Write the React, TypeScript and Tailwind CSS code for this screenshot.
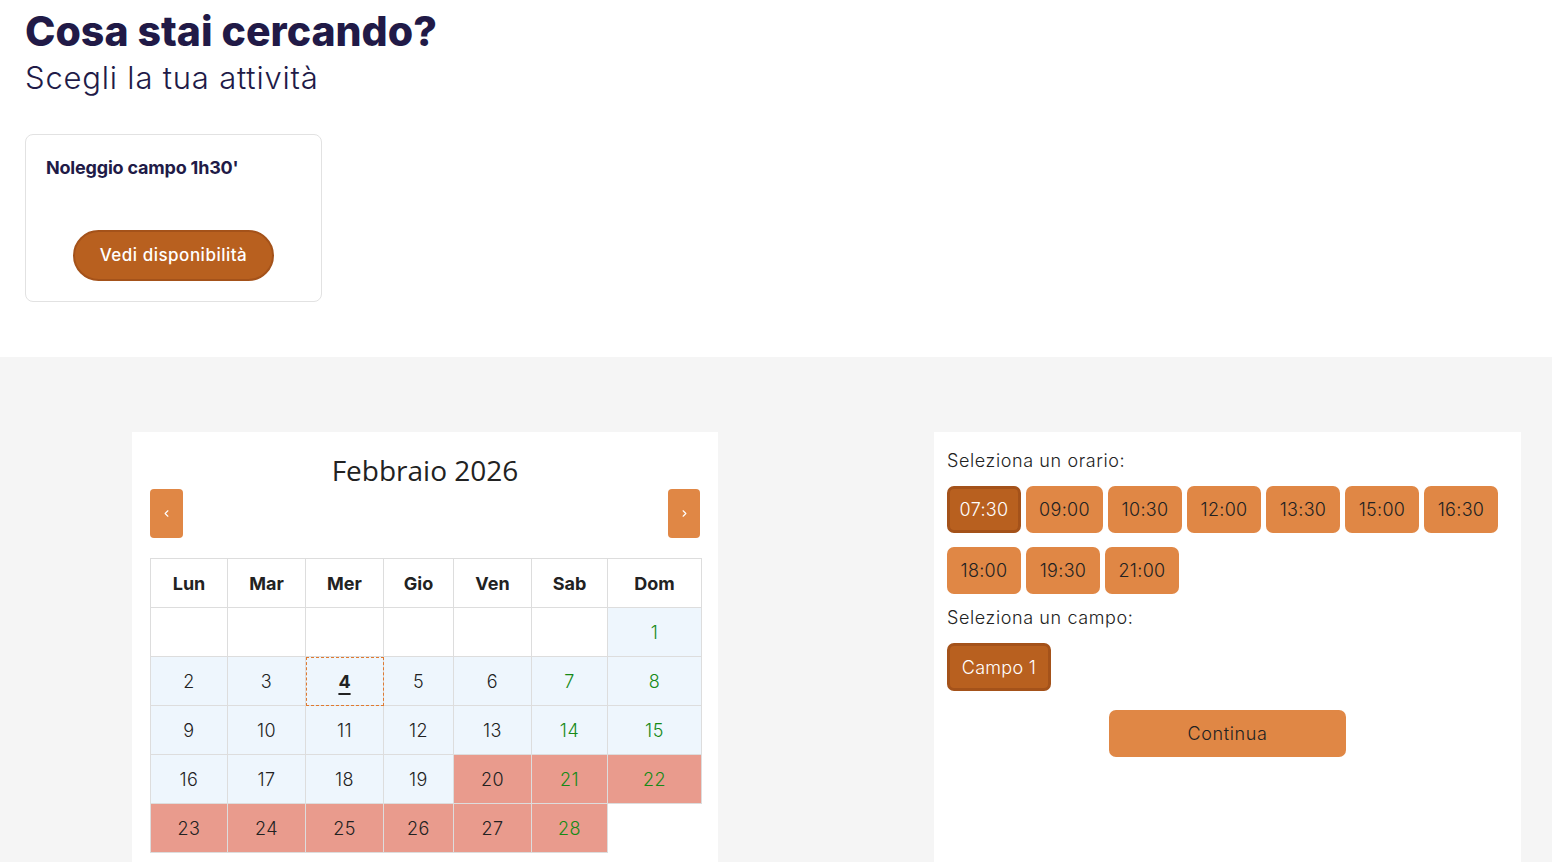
import { ChevronLeft, ChevronRight } from "lucide-react";

const heading = { fontFamily: "Inter, 'Noto Sans', sans-serif" };
const body = { fontFamily: "Inter, 'Noto Sans', sans-serif" };

const days = ["Lun", "Mar", "Mer", "Gio", "Ven", "Sab", "Dom"];
const colW = ["w-[77px]", "w-[78px]", "w-[78px]", "w-[70px]", "w-[78px]", "w-[76px]", "w-[94px]"];

type Cell = { d?: number; tone?: "blue" | "red" | "empty" };

const weeks: Cell[][] = [
  [{}, {}, {}, {}, {}, {}, { d: 1, tone: "blue" }],
  [2, 3, 4, 5, 6, 7, 8].map((d) => ({ d, tone: "blue" as const })),
  [9, 10, 11, 12, 13, 14, 15].map((d) => ({ d, tone: "blue" as const })),
  [16, 17, 18, 19, 20, 21, 22].map((d) => ({ d, tone: d >= 20 ? ("red" as const) : ("blue" as const) })),
  [...[23, 24, 25, 26, 27, 28].map((d) => ({ d, tone: "red" as const })), { tone: "empty" as const }],
];

const times = [
  ["07:30", "09:00", "10:30", "12:00", "13:30", "15:00", "16:30"],
  ["18:00", "19:30", "21:00"],
];

function Calendar() {
  return (
    <div className="w-[586px] bg-white px-[18px] pt-[20px] pb-[40px]">
      <div className="text-center text-[28px] leading-[37px] text-[#222]" style={{ fontFamily: "'Open Sans', sans-serif" }}>
        Febbraio 2026
      </div>
      <div className="flex justify-between">
        <button className="flex h-[49px] w-[33px] items-center justify-center rounded-[4px] bg-[#e08745] text-white">
          <ChevronLeft className="h-[11px] w-[11px]" strokeWidth={2.5} />
        </button>
        <button className="flex h-[49px] w-[32px] items-center justify-center rounded-[4px] bg-[#e08745] text-white">
          <ChevronRight className="h-[11px] w-[11px]" strokeWidth={2.5} />
        </button>
      </div>
      <table className="mt-[20px] w-[551px] table-fixed border-collapse text-[18px] text-[#222]" style={body}>
        <thead>
          <tr className="h-[49px]">
            {days.map((d, i) => (
              <th key={d} className={`${colW[i]} border border-[#dddddd] font-bold`}>
                {d}
              </th>
            ))}
          </tr>
        </thead>
        <tbody>
          {weeks.map((w, wi) => (
            <tr key={wi} className="h-[49px]">
              {w.map((c, ci) => {
                const weekend = ci >= 5;
                const bg =
                  c.tone === "blue" ? "bg-[#eef6fd]" : c.tone === "red" ? "bg-[#e99b8d]" : "bg-white";
                const border = c.tone === "empty" ? "border-0" : "border border-[#dddddd]";
                if (c.d === 4) {
                  return (
                    <td
                      key={ci}
                      className="border border-[#dddddd] bg-[#eef6fd] text-center font-bold outline-1 -outline-offset-1 outline-dashed outline-[#e07a30]"
                    >
                      <span className="underline decoration-2 underline-offset-[5px]">4</span>
                    </td>
                  );
                }
                return (
                  <td
                    key={ci}
                    className={`${bg} ${border} text-center font-light tracking-[0.5px] ${weekend ? "text-[#178a17]" : ""}`}
                  >
                    {c.d ?? ""}
                  </td>
                );
              })}
            </tr>
          ))}
        </tbody>
      </table>
    </div>
  );
}

function Slot({ label, active, w }: { label: string; active?: boolean; w: string }) {
  return (
    <button
      className={`flex h-[47px] ${w} items-center justify-center rounded-[7px] text-[18px] font-light tracking-[0.3px] ${
        active ? "border-[3px] border-[#a4521a] bg-[#b8601f] text-white" : "bg-[#e08745] text-[#222]"
      }`}
    >
      {label}
    </button>
  );
}

function Booking() {
  return (
    <div className="h-full w-[587px] bg-white px-[13px] pt-[17px] text-[18px] tracking-[0.6px] text-[#222]" style={body}>
      <div className="leading-[24px] font-light">Seleziona un orario:</div>
      <div className="mt-[13px] flex flex-col gap-[14px]">
        {times.map((row, ri) => (
          <div key={ri} className="flex gap-[5px]">
            {row.map((t) => (
              <Slot key={t} label={t} active={t === "07:30"} w={t === "09:00" ? "w-[77px]" : "w-[74px]"} />
            ))}
          </div>
        ))}
      </div>
      <div className="mt-[12px] leading-[24px] font-light">Seleziona un campo:</div>
      <button className="mt-[13px] flex h-[48px] w-[104px] items-center justify-center rounded-[7px] border-[3px] border-[#a4521a] bg-[#b8601f] font-light tracking-[0.3px] text-white">
        Campo 1
      </button>
      <div className="mt-[19px] flex justify-center">
        <button className="h-[47px] w-[237px] rounded-[7px] bg-[#e08745] font-light text-[#222]">Continua</button>
      </div>
    </div>
  );
}

export default function App() {
  return (
    <div className="min-h-[862px] bg-[#f5f5f5]">
      <div className="bg-white px-[25px] pt-[6px] pb-[55px]" style={heading}>
        <h1 className="text-[41px] leading-[50px] font-extrabold text-[#211a47]">Cosa stai cercando?</h1>
        <p className="mt-[4px] text-[31px] leading-[36px] font-light tracking-[0.8px] text-[#211a47]">Scegli la tua attività</p>
        <div className="mt-[38px] h-[168px] w-[297px] rounded-[8px] border border-[#e2e2e2] pt-[19px] pl-[20px]">
          <div className="text-[18px] font-bold tracking-[-0.2px] text-[#211a47]">Noleggio campo 1h30'</div>
          <button className="mt-[49px] ml-[27px] h-[51px] w-[201px] rounded-full border-2 border-[#a4521a] bg-[#b8601f] text-[17px] font-medium tracking-[0.5px] text-white">
            Vedi disponibilità
          </button>
        </div>
      </div>
      <div className="flex items-stretch pt-[75px] pl-[132px]">
        <Calendar />
        <div className="ml-[216px]">
          <Booking />
        </div>
      </div>
    </div>
  );
}
